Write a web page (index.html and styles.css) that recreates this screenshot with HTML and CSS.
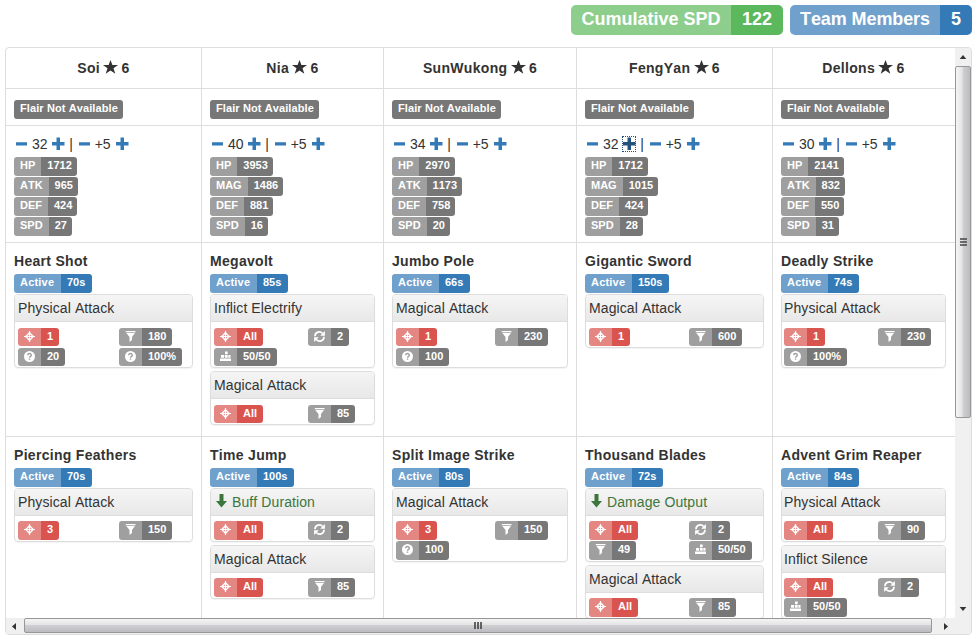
FILE: index.html
```html
<!DOCTYPE html>
<html lang="en">
<head>
<meta charset="utf-8">
<title>Team</title>
<link rel="stylesheet" href="styles.css">
</head>
<body>
<svg class="defs" width="0" height="0" aria-hidden="true">
  <symbol id="minus" viewBox="0 0 14 14"><path d="M2 5.200h11v3.300H2z"/></symbol>
  <symbol id="plus" viewBox="0 0 14 14"><path d="M5.500 0.500h3.500v4.500h4.500v3.500H9V13H5.500V8.500H1V5h4.500z"/></symbol>
  <symbol id="star" viewBox="0 0 15 14"><path d="M7.500 0l1.900 5H15l-4.500 3.300 1.800 5.500-4.800-3.400-4.800 3.400 1.800-5.500L0 5h5.600z"/></symbol>
  <symbol id="down" viewBox="0 0 14 14"><path d="M5.500 0h4v7H13l-5.500 6.500L2 7h3.500z"/></symbol>
  <symbol id="target" viewBox="0 0 11 11"><path d="M5.500 0v11M0 5.500h11" stroke="currentColor" stroke-width="1.200"/><path d="M5.500 1.800L9.200 5.500 5.500 9.200 1.800 5.500z" fill="none" stroke="currentColor" stroke-width="1.400"/></symbol>
  <symbol id="filter" viewBox="0 0 11 11"><path d="M.8 0h9.700v1.300H.8zM1.300 2h8.700L7 6v3L4.500 11V6z"/></symbol>
  <symbol id="refresh" viewBox="0 0 11 11"><path d="M1 5.200C1 .8 6 -.3 8.700 2.500M10 5.800C10 10.200 5 11.300 2.300 8.500" fill="none" stroke="currentColor" stroke-width="1.700"/><path d="M10.900 0v4.700H6.200zM.1 11V6.300h4.700z"/></symbol>
  <symbol id="tower" viewBox="0 0 11 11"><path d="M5 .5h2.700v2.800H5zM1 4h3.200v2.700H1zM5 4h2.700v2.700H5zM8.300 4h2.200v2.700H8.300zM0 7.400h11V10H0z"/></symbol>
  <symbol id="question" viewBox="0 0 11 11"><circle cx="5.500" cy="5.500" r="5.500"/><path d="M3.700 4.300C3.800 2 7.300 2 7.300 4.200 7.300 5.500 5.500 5.200 5.500 6.800M5.500 7.500v1.300" fill="none" stroke="#9f9f9f" stroke-width="1.400"/></symbol>
</svg>
<header class="summary">
  <span class="total green"><span>Cumulative SPD</span><b>122</b></span>
  <span class="total blue"><span>Team Members</span><b>5</b></span>
</header>
<main class="viewer">
  <div class="view">
    <div class="row names">
      <div>Soi <svg><use href="#star"/></svg> 6</div>
      <div>Nia <svg><use href="#star"/></svg> 6</div>
      <div>SunWukong <svg><use href="#star"/></svg> 6</div>
      <div>FengYan <svg><use href="#star"/></svg> 6</div>
      <div>Dellons <svg><use href="#star"/></svg> 6</div>
    </div>
    <div class="row flairs">
      <div><span class="flair">Flair Not Available</span></div>
      <div><span class="flair">Flair Not Available</span></div>
      <div><span class="flair">Flair Not Available</span></div>
      <div><span class="flair">Flair Not Available</span></div>
      <div><span class="flair">Flair Not Available</span></div>
    </div>
    <div class="row stats">
      <div>
        <p class="level"><a><svg><use href="#minus"/></svg></a> 32 <a><svg><use href="#plus"/></svg></a> | <a><svg><use href="#minus"/></svg></a> +5 <a><svg><use href="#plus"/></svg></a></p>
        <span class="tag"><i>HP</i><b>1712</b></span>
        <span class="tag"><i>ATK</i><b>965</b></span>
        <span class="tag"><i>DEF</i><b>424</b></span>
        <span class="tag"><i>SPD</i><b>27</b></span>
      </div>
      <div>
        <p class="level"><a><svg><use href="#minus"/></svg></a> 40 <a><svg><use href="#plus"/></svg></a> | <a><svg><use href="#minus"/></svg></a> +5 <a><svg><use href="#plus"/></svg></a></p>
        <span class="tag"><i>HP</i><b>3953</b></span>
        <span class="tag"><i>MAG</i><b>1486</b></span>
        <span class="tag"><i>DEF</i><b>881</b></span>
        <span class="tag"><i>SPD</i><b>16</b></span>
      </div>
      <div>
        <p class="level"><a><svg><use href="#minus"/></svg></a> 34 <a><svg><use href="#plus"/></svg></a> | <a><svg><use href="#minus"/></svg></a> +5 <a><svg><use href="#plus"/></svg></a></p>
        <span class="tag"><i>HP</i><b>2970</b></span>
        <span class="tag"><i>ATK</i><b>1173</b></span>
        <span class="tag"><i>DEF</i><b>758</b></span>
        <span class="tag"><i>SPD</i><b>20</b></span>
      </div>
      <div>
        <p class="level"><a><svg><use href="#minus"/></svg></a> 32 <a class="focused"><svg><use href="#plus"/></svg></a> | <a><svg><use href="#minus"/></svg></a> +5 <a><svg><use href="#plus"/></svg></a></p>
        <span class="tag"><i>HP</i><b>1712</b></span>
        <span class="tag"><i>MAG</i><b>1015</b></span>
        <span class="tag"><i>DEF</i><b>424</b></span>
        <span class="tag"><i>SPD</i><b>28</b></span>
      </div>
      <div>
        <p class="level"><a><svg><use href="#minus"/></svg></a> 30 <a><svg><use href="#plus"/></svg></a> | <a><svg><use href="#minus"/></svg></a> +5 <a><svg><use href="#plus"/></svg></a></p>
        <span class="tag"><i>HP</i><b>2141</b></span>
        <span class="tag"><i>ATK</i><b>832</b></span>
        <span class="tag"><i>DEF</i><b>550</b></span>
        <span class="tag"><i>SPD</i><b>31</b></span>
      </div>
    </div>
    <div class="row skills first">
      <div>
        <h4>Heart Shot</h4>
        <span class="tag blue"><i>Active</i><b>70s</b></span>
        <section class="panel">
          <h5>Physical Attack</h5>
          <div class="effects">
            <span class="tag red"><i><svg><use href="#target"/></svg></i><b>1</b></span>
            <span class="tag"><i><svg><use href="#filter"/></svg></i><b>180</b></span>
            <span class="tag"><i><svg><use href="#question"/></svg></i><b>20</b></span>
            <span class="tag"><i><svg><use href="#question"/></svg></i><b>100%</b></span>
          </div>
        </section>
      </div>
      <div>
        <h4>Megavolt</h4>
        <span class="tag blue"><i>Active</i><b>85s</b></span>
        <section class="panel">
          <h5>Inflict Electrify</h5>
          <div class="effects">
            <span class="tag red"><i><svg><use href="#target"/></svg></i><b>All</b></span>
            <span class="tag"><i><svg><use href="#refresh"/></svg></i><b>2</b></span>
            <span class="tag"><i><svg><use href="#tower"/></svg></i><b>50/50</b></span>
          </div>
        </section>
        <section class="panel">
          <h5>Magical Attack</h5>
          <div class="effects">
            <span class="tag red"><i><svg><use href="#target"/></svg></i><b>All</b></span>
            <span class="tag"><i><svg><use href="#filter"/></svg></i><b>85</b></span>
          </div>
        </section>
      </div>
      <div>
        <h4>Jumbo Pole</h4>
        <span class="tag blue"><i>Active</i><b>66s</b></span>
        <section class="panel">
          <h5>Magical Attack</h5>
          <div class="effects">
            <span class="tag red"><i><svg><use href="#target"/></svg></i><b>1</b></span>
            <span class="tag"><i><svg><use href="#filter"/></svg></i><b>230</b></span>
            <span class="tag"><i><svg><use href="#question"/></svg></i><b>100</b></span>
          </div>
        </section>
      </div>
      <div>
        <h4>Gigantic Sword</h4>
        <span class="tag blue"><i>Active</i><b>150s</b></span>
        <section class="panel">
          <h5>Magical Attack</h5>
          <div class="effects">
            <span class="tag red"><i><svg><use href="#target"/></svg></i><b>1</b></span>
            <span class="tag"><i><svg><use href="#filter"/></svg></i><b>600</b></span>
          </div>
        </section>
      </div>
      <div>
        <h4>Deadly Strike</h4>
        <span class="tag blue"><i>Active</i><b>74s</b></span>
        <section class="panel">
          <h5>Physical Attack</h5>
          <div class="effects">
            <span class="tag red"><i><svg><use href="#target"/></svg></i><b>1</b></span>
            <span class="tag"><i><svg><use href="#filter"/></svg></i><b>230</b></span>
            <span class="tag"><i><svg><use href="#question"/></svg></i><b>100%</b></span>
          </div>
        </section>
      </div>
    </div>
    <div class="row skills">
      <div>
        <h4>Piercing Feathers</h4>
        <span class="tag blue"><i>Active</i><b>70s</b></span>
        <section class="panel">
          <h5>Physical Attack</h5>
          <div class="effects">
            <span class="tag red"><i><svg><use href="#target"/></svg></i><b>3</b></span>
            <span class="tag"><i><svg><use href="#filter"/></svg></i><b>150</b></span>
          </div>
        </section>
      </div>
      <div>
        <h4>Time Jump</h4>
        <span class="tag blue"><i>Active</i><b>100s</b></span>
        <section class="panel">
          <h5 class="buff"><svg><use href="#down"/></svg> Buff Duration</h5>
          <div class="effects">
            <span class="tag red"><i><svg><use href="#target"/></svg></i><b>All</b></span>
            <span class="tag"><i><svg><use href="#refresh"/></svg></i><b>2</b></span>
          </div>
        </section>
        <section class="panel">
          <h5>Magical Attack</h5>
          <div class="effects">
            <span class="tag red"><i><svg><use href="#target"/></svg></i><b>All</b></span>
            <span class="tag"><i><svg><use href="#filter"/></svg></i><b>85</b></span>
          </div>
        </section>
      </div>
      <div>
        <h4>Split Image Strike</h4>
        <span class="tag blue"><i>Active</i><b>80s</b></span>
        <section class="panel">
          <h5>Magical Attack</h5>
          <div class="effects">
            <span class="tag red"><i><svg><use href="#target"/></svg></i><b>3</b></span>
            <span class="tag"><i><svg><use href="#filter"/></svg></i><b>150</b></span>
            <span class="tag"><i><svg><use href="#question"/></svg></i><b>100</b></span>
          </div>
        </section>
      </div>
      <div>
        <h4>Thousand Blades</h4>
        <span class="tag blue"><i>Active</i><b>72s</b></span>
        <section class="panel">
          <h5 class="buff"><svg><use href="#down"/></svg> Damage Output</h5>
          <div class="effects">
            <span class="tag red"><i><svg><use href="#target"/></svg></i><b>All</b></span>
            <span class="tag"><i><svg><use href="#refresh"/></svg></i><b>2</b></span>
            <span class="tag"><i><svg><use href="#filter"/></svg></i><b>49</b></span>
            <span class="tag"><i><svg><use href="#tower"/></svg></i><b>50/50</b></span>
          </div>
        </section>
        <section class="panel">
          <h5>Magical Attack</h5>
          <div class="effects">
            <span class="tag red"><i><svg><use href="#target"/></svg></i><b>All</b></span>
            <span class="tag"><i><svg><use href="#filter"/></svg></i><b>85</b></span>
          </div>
        </section>
      </div>
      <div>
        <h4>Advent Grim Reaper</h4>
        <span class="tag blue"><i>Active</i><b>84s</b></span>
        <section class="panel">
          <h5>Physical Attack</h5>
          <div class="effects">
            <span class="tag red"><i><svg><use href="#target"/></svg></i><b>All</b></span>
            <span class="tag"><i><svg><use href="#filter"/></svg></i><b>90</b></span>
          </div>
        </section>
        <section class="panel">
          <h5>Inflict Silence</h5>
          <div class="effects">
            <span class="tag red"><i><svg><use href="#target"/></svg></i><b>All</b></span>
            <span class="tag"><i><svg><use href="#refresh"/></svg></i><b>2</b></span>
            <span class="tag"><i><svg><use href="#tower"/></svg></i><b>50/50</b></span>
          </div>
        </section>
      </div>
    </div>
  </div>
  <div class="bar vertical">
    <svg class="arrow" viewBox="0 0 17 18"><path d="M5 11h7L8.500 7z"/></svg>
    <div class="thumb"><svg width="9" height="9" viewBox="0 0 9 9"><path d="M1 1h7M1 4h7M1 7h7"/></svg></div>
    <svg class="arrow" viewBox="0 0 17 18"><path d="M5 7h7L8.500 11z"/></svg>
  </div>
  <div class="bar horizontal">
    <svg class="arrow" viewBox="0 0 18 17"><path d="M10 5v7L6 8.500z"/></svg>
    <div class="thumb"><svg width="9" height="9" viewBox="0 0 9 9"><path d="M1 1v7M4 1v7M7 1v7"/></svg></div>
    <svg class="arrow" viewBox="0 0 18 17"><path d="M7 5v7l4-3.500z"/></svg>
  </div>
  <div class="corner"></div>
</main>
</body>
</html>
```

FILE: styles.css
```css
* { box-sizing: border-box; }
body {
  margin: 0;
  padding: 5px 5px 0;
  height: 639px;
  overflow: hidden;
  background: #fff;
  color: #333;
  font: 14px/20px "Liberation Sans", Arial, sans-serif;
  font-kerning: none;
}
svg { fill: currentColor; }
.defs { display: block; }

.summary { display: flex; justify-content: flex-end; gap: 7px; height: 42px; }
.total {
  display: flex;
  height: 30px;
  border-radius: 5px;
  overflow: hidden;
  color: #fff;
  font-weight: bold;
  font-size: 18px;
  line-height: 28px;
  text-align: center;
  white-space: nowrap;
}
.total span { padding: 0 10px; }
.total b { width: 52px; }
.total.green span { width: 160px; background: #8dce8d; }
.total.green b { background: #5cb85c; }
.total.blue span { width: 150px; background: #70a1cd; letter-spacing: -.1px; }
.total.blue b { width: 32px; background: #337ab7; }

.viewer {
  display: grid;
  grid-template: 570px 17px / 949px 16px;
  width: 967px;
  height: 588px;
  border: 1px solid #ddd;
  border-radius: 4px;
  overflow: hidden;
}
.view { overflow: hidden; }
.row {
  display: grid;
  grid-template-columns: 196px 182px 193px 196px 182px;
  border-bottom: 1px solid #ddd;
}
.row > div { padding: 0 8px; border-right: 1px solid #ddd; }
.row > div:last-child { border-right-color: transparent; }
.names { height: 41px; text-align: center; font-weight: bold; line-height: 40px; letter-spacing: .3px; word-spacing: -.9px; }
.names svg { width: 15px; height: 14px; vertical-align: -1px; }
.flairs { height: 37px; }
.flair {
  display: block;
  width: 109px;
  height: 19px;
  margin-top: 11px;
  padding-left: 6px;
  border-radius: 3px;
  background: #777;
  color: #fff;
  font-weight: bold;
  font-size: 11px;
  line-height: 17px;
  letter-spacing: .1px;
}
.row > div:last-child .flair { width: 108px; }
.stats { height: 117px; }
.level { margin: 8px 0 3px; height: 20px; }
.level svg { width: 14px; height: 14px; vertical-align: -2px; }
.level a { color: #337ab7; }
.level .focused { color: #23527c; outline: 1px dotted #23527c; outline-offset: -1px; }

.tag {
  display: flex;
  width: max-content;
  height: 19px;
  margin-bottom: 1px;
  border-radius: 3px;
  overflow: hidden;
  color: #fff;
  font-weight: bold;
  font-size: 11px;
  line-height: 17px;
}
.tag i { padding: 0 6px; font-style: normal; background: #9f9f9f; }
.tag b { padding: 0 6px; background: #777; }
.stats .tag b { padding-right: 5px; }
.tag.blue i { width: 47px; background: #70a1cd; letter-spacing: .2px; }
.tag.blue b { padding-right: 7px; background: #337ab7; }
.tag.red i { background: #e48682; }
.tag.red b { background: #d9534f; }
.tag svg { display: block; width: 11px; height: 11px; margin-top: 3px; }

.skills { height: 194px; }
.skills h4 { margin: 8px 0 3px; font-size: 14px; line-height: 20px; letter-spacing: .3px; }
.panel {
  width: 179px;
  margin-bottom: 3px;
  border: 1px solid #ddd;
  border-radius: 4px;
  box-shadow: 0 1px 1px rgba(0, 0, 0, .05);
}
.skills .panel h5 {
  height: 27px;
  margin: 0;
  padding-left: 3px;
  border-bottom: 1px solid #ddd;
  border-radius: 3px 3px 0 0;
  background: linear-gradient(#f5f5f5, #e8e8e8);
  font-weight: normal;
  font-size: 14px;
  line-height: 26px;
  letter-spacing: .1px;
}
.skills .panel .buff { color: #3c763d; }
.buff svg { width: 14px; height: 14px; vertical-align: -1px; }
.effects { display: grid; grid-template-columns: 101px 1fr; padding: 5px 0 0 3px; }
.first .effects { padding-top: 6px; margin-bottom: -1px; }
.first .effects .tag { height: 18px; margin-bottom: 2px; }
.row > div:nth-child(2) .panel, .row > div:nth-child(5) .panel { width: 165px; }
.row > div:nth-child(3) .panel { width: 176px; }
.row > div:nth-child(2) .effects, .row > div:nth-child(5) .effects { grid-template-columns: 94px 1fr; }
.row > div:nth-child(3) .effects { grid-template-columns: 99px 1fr; }
.row > div:nth-child(4) .effects { grid-template-columns: 100px 1fr; }
.row > div:nth-child(5) .effects, .row > div:nth-child(5) .panel h5 { padding-left: 2px; }

.bar { display: flex; background: #f0f0f0; color: #333; }
.vertical { flex-direction: column; }
.vertical .arrow { width: 16px; height: 18px; }
.horizontal .arrow { width: 18px; height: 17px; }
.thumb {
  display: flex;
  align-items: center;
  justify-content: center;
  border: 1px solid #979797;
  border-radius: 2px;
}
.thumb path { stroke: #444; stroke-width: 1.600; }
.vertical .thumb { height: 352px; margin-bottom: 182px; background: linear-gradient(90deg, #f5f5f5, #e3e3e5 45%, #cfcfd2 50%, #bcbcc0); }
.horizontal .thumb { width: 908px; height: 15px; margin-right: 5px; background: linear-gradient(#f5f5f5, #e3e3e5 45%, #cfcfd2 50%, #bcbcc0); }
.corner { background: #f0f0f0; }
```
